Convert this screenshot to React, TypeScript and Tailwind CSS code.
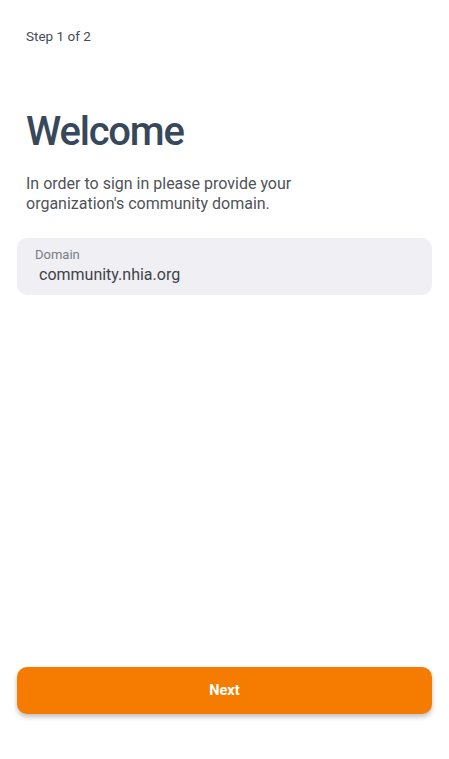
export default function App() {
  return (
    <div className="min-h-screen bg-white font-['Roboto',sans-serif] flex flex-col">
      {/* Header */}
      <div className="pl-[26px] pt-[28px] text-[13.5px] leading-[16px] text-[#444b55]">
        Step 1 of 2
      </div>

      {/* Title & intro */}
      <div className="px-[26px] pt-[64px]">
        <h1 className="text-[40px] leading-[48px] font-medium text-[#37485a] tracking-[-1.2px]">
          Welcome
        </h1>
        <p className="mt-[18px] text-[16px] leading-[20px] text-[#4f5358] max-w-[300px]">
          In order to sign in please provide your organization's community domain.
        </p>
      </div>

      {/* Domain field */}
      <div className="mx-[17px] mt-[24px] h-[57px] rounded-[10px] bg-[#efeff4] pl-[18px] pt-[9px]">
        <div className="text-[13px] leading-[15px] text-[#7a7d84]">Domain</div>
        <div className="pl-[4px] mt-[3px] text-[16px] leading-[20px] text-[#3e434b]">
          community.nhia.org
        </div>
      </div>

      <div className="flex-1" />

      {/* Next button */}
      <div className="px-[17px] pb-[45px] pt-[10px]">
        <button className="w-full h-[47px] rounded-[10px] bg-[#f57c00] text-white text-[14.5px] font-bold shadow-[0_3px_5px_rgba(0,0,0,0.25)]">
          Next
        </button>
      </div>
    </div>
  );
}
